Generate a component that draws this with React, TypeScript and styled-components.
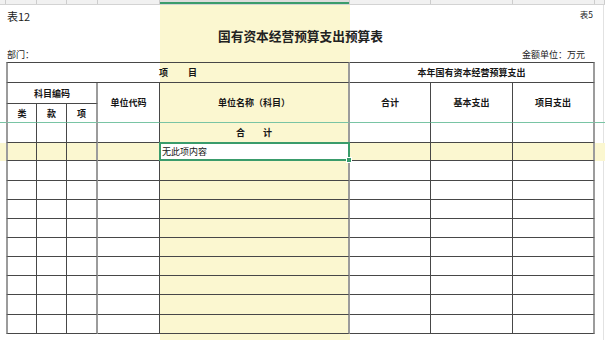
import React from "react";
import styled, { createGlobalStyle } from "styled-components";

const HIGHLIGHT = "#fbf7d0";
const GRID = "#474747";
const EDGE = "#9c9c9c";
const FREEZE = "#79c4a4";
const SELECT = "#3a9c6b";

const widths = [6, 31, 30, 31, 62, 190, 81, 82, 82, 10];

const GlobalStyle = createGlobalStyle`
  html, body {
    margin: 0;
    padding: 0;
    background: #fff;
  }
  body {
    font-family: "Noto Sans CJK SC", "Noto Sans", sans-serif;
    color: #1c1c1c;
  }
`;

const Sheet = styled.div`
  width: 605px;
  height: 340px;
  overflow: hidden;
  background: linear-gradient(
    90deg,
    #fff 0 160px,
    ${HIGHLIGHT} 160px 350px,
    #fff 350px 603px,
    #e2e2e2 603px 604px,
    #fff 604px
  );
`;

const ColumnBar = styled.div`
  display: grid;
  grid-template-columns: ${widths.map((w) => w + "px").join(" ")};
  height: 4px;
  background: #f1f1f1;
  border-bottom: 1px solid #d3d3d3;
`;

const ColumnHead = styled.div<{ $active?: boolean }>`
  border-right: 1px solid #cdcdcd;
  background: ${(p) => (p.$active ? "#dcdcdc" : "transparent")};
  box-shadow: ${(p) => (p.$active ? `inset 0 -2px 0 ${SELECT}` : "none")};
`;

const Caption = styled.div`
  display: flex;
  justify-content: space-between;
  align-items: center;
  height: 19px;
  padding: 0 12px 0 7px;
`;

const SheetNo = styled.span<{ $small?: boolean }>`
  font-size: ${(p) => (p.$small ? "8.5px" : "11px")};
  line-height: 1;
  color: #222;
  padding-top: ${(p) => (p.$small ? "0" : "3px")};
`;

const Title = styled.h1`
  margin: 0 0 0 6px;
  width: 589px;
  height: 22px;
  display: flex;
  align-items: center;
  justify-content: center;
  font-size: 12.7px;
  font-weight: 700;
  color: #222;
`;

const Meta = styled.div`
  display: flex;
  justify-content: space-between;
  align-items: center;
  height: 16px;
  padding: 0 20px 0 7px;
  font-size: 9px;
  line-height: 1;
  color: #222;
`;

const Grid = styled.table`
  border-collapse: separate;
  border-spacing: 0;
  table-layout: fixed;
  width: 605px;
`;

const Col = styled.col<{ $w: number }>`
  width: ${(p) => p.$w}px;
`;

const Row = styled.tr<{ $h: number; $highlight?: boolean }>`
  height: ${(p) => p.$h}px;
  background: ${(p) => (p.$highlight ? HIGHLIGHT : "transparent")};
`;

type CellProps = {
  $edgeLeft?: boolean;
  $edgeRight?: boolean;
  $top?: boolean;
  $freeze?: boolean;
  $open?: boolean;
  $bold?: boolean;
};

const Cell = styled.td<CellProps>`
  padding: 0;
  font-size: 9px;
  line-height: 1;
  font-weight: ${(p) => (p.$bold ? 700 : 400)};
  text-align: center;
  vertical-align: middle;
  white-space: pre;
  color: #161616;
  border-left: ${(p) => (p.$edgeLeft ? `2px solid ${EDGE}` : "none")};
  border-right: ${(p) => (p.$edgeRight ? `2px solid ${EDGE}` : `1px solid ${GRID}`)};
  border-top: ${(p) =>
    p.$top ? `1px solid ${GRID}` : p.$freeze ? `1px solid ${FREEZE}` : "none"};
  border-bottom: ${(p) => (p.$open ? "none" : `1px solid ${GRID}`)};
`;

const Gutter = styled.td<{ $freeze?: boolean }>`
  padding: 0;
  border-top: ${(p) => (p.$freeze ? `1px solid ${FREEZE}` : "none")};
`;

const Selected = styled(Cell)`
  position: relative;
  background: #fff;
  text-align: left;
  padding-left: 2px;

  &::after {
    content: "";
    position: absolute;
    top: -1px;
    left: -1px;
    right: -2px;
    bottom: -1px;
    border: 2px solid ${SELECT};
  }

  &::before {
    content: "";
    position: absolute;
    right: -4px;
    bottom: -3px;
    width: 4px;
    height: 4px;
    background: ${SELECT};
    border: 1px solid #fff;
    z-index: 1;
  }
`;

const bodyCols = [1, 2, 3, 4, 5, 6, 7, 8];
const isEdgeRight = (c: number) => c === 3 || c === 5 || c === 8;
const emptyRows = [20, 19, 19, 19, 19, 19, 19, 20, 19];

export default function App() {
  return (
    <Sheet>
      <GlobalStyle />
      <ColumnBar>
        {widths.map((w, i) => (
          <ColumnHead key={i} $active={i === 5} />
        ))}
      </ColumnBar>

      <Caption>
        <SheetNo>表12</SheetNo>
        <SheetNo $small>表5</SheetNo>
      </Caption>
      <Title>国有资本经营预算支出预算表</Title>
      <Meta>
        <span>部门：</span>
        <span>金额单位：万元</span>
      </Meta>

      <Grid>
        <colgroup>
          {widths.map((w, i) => (
            <Col key={i} $w={w} />
          ))}
        </colgroup>
        <tbody>
          <Row $h={21}>
            <Gutter />
            <Cell colSpan={5} $top $edgeLeft $edgeRight $bold>
              {"项　　 目"}
            </Cell>
            <Cell colSpan={3} $top $edgeRight $bold>
              本年国有资本经营预算支出
            </Cell>
            <Gutter />
          </Row>
          <Row $h={21}>
            <Gutter />
            <Cell colSpan={3} $edgeLeft $edgeRight $bold>
              科目编码
            </Cell>
            <Cell rowSpan={2} $open $bold>
              单位代码
            </Cell>
            <Cell rowSpan={2} $open $edgeRight $bold>
              单位名称（科目）
            </Cell>
            <Cell rowSpan={2} $open $bold>
              合计
            </Cell>
            <Cell rowSpan={2} $open $bold>
              基本支出
            </Cell>
            <Cell rowSpan={2} $open $edgeRight $bold>
              项目支出
            </Cell>
            <Gutter />
          </Row>
          <Row $h={18}>
            <Gutter />
            <Cell $open $edgeLeft $bold>
              类
            </Cell>
            <Cell $open $bold>
              款
            </Cell>
            <Cell $open $edgeRight $bold>
              项
            </Cell>
            <Gutter />
          </Row>

          <Row $h={21}>
            <Gutter $freeze />
            {bodyCols.map((c) => (
              <Cell key={c} $freeze $edgeLeft={c === 1} $edgeRight={isEdgeRight(c)} $bold>
                {c === 5 ? "合　　计" : ""}
              </Cell>
            ))}
            <Gutter $freeze />
          </Row>

          <Row $h={18} $highlight>
            <Gutter />
            {bodyCols.map((c) =>
              c === 5 ? (
                <Selected key={c} $edgeRight>
                  无此项内容
                </Selected>
              ) : (
                <Cell key={c} $edgeLeft={c === 1} $edgeRight={isEdgeRight(c)} />
              )
            )}
            <Gutter />
          </Row>

          {emptyRows.map((h, r) => (
            <Row key={r} $h={h}>
              <Gutter />
              {bodyCols.map((c) => (
                <Cell key={c} $edgeLeft={c === 1} $edgeRight={isEdgeRight(c)} />
              ))}
              <Gutter />
            </Row>
          ))}
        </tbody>
      </Grid>
    </Sheet>
  );
}
